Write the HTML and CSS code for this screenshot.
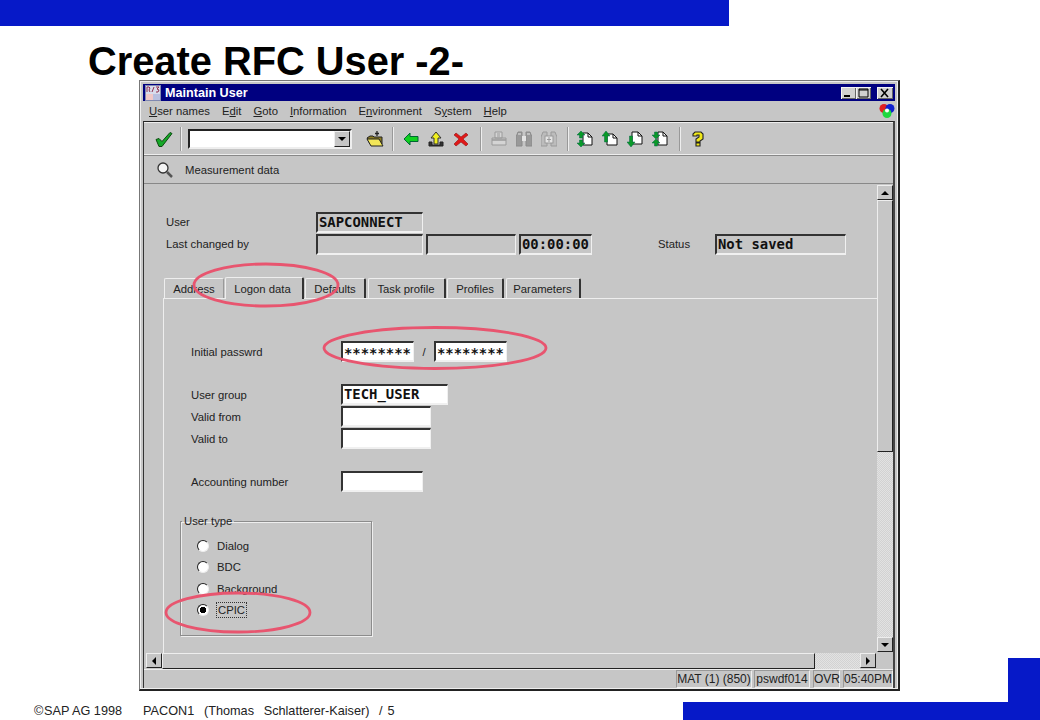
FILE: index.html
```html
<!DOCTYPE html>
<html lang="en">
<head>
<meta charset="utf-8">
<title>Create RFC User -2-</title>
<link rel="stylesheet" href="styles.css">
</head>
<body>
<div class="slide">
  <div class="topbar"></div>
  <h1 class="slide-title">Create RFC User -2-</h1>
  <div class="main">
    <div class="window">
      <div class="titlebar">
        <svg class="app-icon" viewBox="0 0 16 16"><rect x="0.5" y="0.5" width="15" height="15" fill="#d8dcec" stroke="#8088b0"/><rect x="1" y="9" width="7" height="6" fill="#f0c8c8"/><rect x="8" y="9" width="7" height="6" fill="#b8c0e0"/><path d="M2 7V2h2l1 1-1 2 1 2M7 7l2-5M11 2h3l-2 2 2 1-1 2h-2" fill="none" stroke="#903050"/></svg>
        <span class="titlebar-text">Maintain User</span>
        <span class="wbtn"><svg viewBox="0 0 15 12"><rect x="3" y="8" width="6" height="2" fill="#000"/></svg></span>
        <span class="wbtn"><svg viewBox="0 0 15 12"><path d="M3 2h9v8H3zM3 3h9" fill="none" stroke="#000"/></svg></span>
        <span class="wbtn wbtn-close"><svg viewBox="0 0 15 12"><path d="M4 2l7 8M11 2l-7 8" stroke="#000" stroke-width="1.6"/></svg></span>
      </div>
      <div class="menubar">
        <span><u>U</u>ser names</span><span>E<u>d</u>it</span><span><u>G</u>oto</span><span><u>I</u>nformation</span><span>E<u>n</u>vironment</span><span>S<u>y</u>stem</span><span><u>H</u>elp</span>
        <svg class="sap-logo" viewBox="0 0 16 16"><circle cx="5" cy="5.5" r="4.5" fill="#e02020"/><circle cx="11" cy="5.5" r="4.5" fill="#1020d0"/><circle cx="8" cy="10.5" r="4.5" fill="#20d840"/><circle cx="8" cy="7.5" r="2" fill="#fff"/></svg>
      </div>
      <div class="inner">
        <div class="toolbar">
          <span class="tool tool-first"><svg viewBox="0 0 18 16"><path d="M1 8l3-1 3 3 8-9 2 1L7 15H4z" fill="#16a828" stroke="#0c4a10"/></svg></span>
          <span class="sep sep-a"></span>
          <span class="combo"><span class="combo-btn"><svg viewBox="0 0 8 4"><path d="M0 0h8L4 4z" fill="#000"/></svg></span></span>
          <span class="tool tool-gap"><svg class="icon-wide" viewBox="0 0 18 16"><path d="M11 0v5M9 2.500h4" stroke="#222" stroke-width="1.300"/><path d="M1 7l3-2h3l1 1h8v7H4z" fill="#8a7a20" stroke="#222"/><path d="M1 8h12l4 7H5z" fill="#f2e658" stroke="#222"/></svg></span>
          <span class="sep"></span>
          <span class="tool"><svg viewBox="0 0 16 16"><path d="M1 8l6-6v3.500h8v5H7V14z" fill="#10d020" stroke="#063"/></svg></span>
          <span class="tool"><svg viewBox="0 0 16 16"><path d="M1 11h3v3h8v-3h3v4H1z" fill="#333" stroke="#222"/><path d="M8 1l5 6h-3v6H6V7H3z" fill="#f0f020" stroke="#333"/></svg></span>
          <span class="tool"><svg viewBox="0 0 16 16"><path d="M3 2l5 4 5-4 2 2-5 4 5 5-2 2-5-4-5 4-2-2 5-5-5-4z" fill="#e01818" stroke="#901010" stroke-width=".6"/></svg></span>
          <span class="sep sep-b"></span>
          <span class="tool"><svg viewBox="0 0 16 16"><path d="M4 1h7v6H4zM1 9h14v5H1z" fill="#d4d4d4" stroke="#9a9a9a"/><path d="M1 7h14v2H1zM6 3h3M6 5h3" fill="none" stroke="#9a9a9a"/></svg></span>
          <span class="tool"><svg viewBox="0 0 16 16"><path d="M2 1h4v14H0V6zM10 1h4l2 5v9h-6z" fill="#999" stroke="#8a8a8a"/><rect x="6" y="5" width="4" height="5" fill="#e4e4e4"/><path d="M2 3h3M11 3h3" stroke="#e4e4e4"/></svg></span>
          <span class="tool"><svg viewBox="0 0 16 16"><path d="M2 1h4v14H0V6zM10 1h4l2 5v9h-6z" fill="#bcbcbc" stroke="#9a9a9a"/><rect x="4" y="5" width="8" height="7" fill="#e4e4e4" stroke="#9a9a9a"/><path d="M8 6v5M6 8.500h4" stroke="#9a9a9a"/></svg></span>
          <span class="sep sep-c"></span>
          <span class="tool"><svg viewBox="0 0 16 16"><path d="M6 2h5l4 4v8H6z" fill="#fff" stroke="#111"/><path d="M11 2v4h4" fill="none" stroke="#111"/><path d="M4 0L8 4H5.500v3h-3V4H0zM4 16L8 12H5.500V9h-3v3H0z" fill="#0a9a28" stroke="#064" stroke-width=".5"/></svg></span>
          <span class="tool"><svg viewBox="0 0 16 16"><path d="M5 3h6l4 4v7H5z" fill="#fff" stroke="#111"/><path d="M11 3v4h4" fill="none" stroke="#111"/><path d="M4 0L8 5H5.500v6h-3V5H0z" fill="#0a9a28" stroke="#064" stroke-width=".5"/></svg></span>
          <span class="tool"><svg viewBox="0 0 16 16"><path d="M5 1h6l4 4v8H5z" fill="#fff" stroke="#111"/><path d="M11 1v4h4" fill="none" stroke="#111"/><path d="M4 16L8 11H5.500V5h-3v6H0z" fill="#0a9a28" stroke="#064" stroke-width=".5"/></svg></span>
          <span class="tool"><svg viewBox="0 0 16 16"><path d="M6 1h5l4 4v9H6z" fill="#fff" stroke="#111"/><path d="M11 1v4h4" fill="none" stroke="#111"/><path d="M4 8L8 4H5.500V1h-3v3H0zM4 8l4 4H5.500v3h-3v-3H0z" fill="#0a9a28" stroke="#064" stroke-width=".5"/></svg></span>
          <span class="sep sep-b"></span>
          <span class="tool"><svg viewBox="0 0 16 16"><path d="M3 5V3l2-2h6l2 2v5l-3 2v1H6V8l3-2V4H7v1zM6 12h4v3H6z" fill="#f0e818" stroke="#222" stroke-width="1.100"/></svg></span>
        </div>
        <div class="appbar">
          <svg class="magnifier" viewBox="0 0 18 18"><circle cx="7" cy="7" r="5" fill="#f4f4f4" stroke="#333" stroke-width="1.300"/><path d="M11 11l5 5" stroke="#555" stroke-width="2.500"/></svg>
          <span>Measurement data</span>
        </div>
        <div class="client">
          <div class="form">
            <div class="head-rows">
              <div class="row"><span class="label head-label">User</span><span class="field mono f107">SAPCONNECT</span></div>
              <div class="row">
                <span class="label head-label">Last changed by</span>
                <span class="field f107"></span>
                <span class="field f90"></span>
                <span class="field mono f73">00:00:00</span>
                <span class="label status-label">Status</span>
                <span class="field mono f131">Not saved</span>
              </div>
            </div>
            <div class="tabs">
              <span class="tab t-address">Address</span>
              <span class="tab tab-active t-logon">Logon data</span>
              <span class="tab t-defaults">Defaults</span>
              <span class="tab t-task">Task profile</span>
              <span class="tab t-profiles">Profiles</span>
              <span class="tab t-params">Parameters</span>
            </div>
            <div class="panel">
              <div class="row pw-row">
                <span class="label form-label">Initial passwrd</span>
                <span class="field input mono f73">********</span>
                <span class="slash">/</span>
                <span class="field input mono f73">********</span>
              </div>
              <div class="row group-row"><span class="label form-label">User group</span><span class="field input mono f107">TECH_USER</span></div>
              <div class="row"><span class="label form-label">Valid from</span><span class="field input f90"></span></div>
              <div class="row"><span class="label form-label">Valid to</span><span class="field input f90"></span></div>
              <div class="row acct-row"><span class="label form-label">Accounting number</span><span class="field input f82"></span></div>
              <fieldset class="usertype">
                <legend>User type</legend>
                <div class="radio-row"><span class="radio"></span><span>Dialog</span></div>
                <div class="radio-row"><span class="radio"></span><span>BDC</span></div>
                <div class="radio-row"><span class="radio"></span><span>Background</span></div>
                <div class="radio-row"><span class="radio radio-on"></span><span class="focus">CPIC</span></div>
              </fieldset>
            </div>
          </div>
          <div class="vscroll">
            <span class="sbtn"><svg viewBox="0 0 8 4"><path d="M0 4h8L4 0z" fill="#000"/></svg></span>
            <span class="vthumb"></span>
            <span class="track"></span>
            <span class="sbtn"><svg viewBox="0 0 8 4"><path d="M0 0h8L4 4z" fill="#000"/></svg></span>
          </div>
        </div>
        <div class="hscroll">
          <span class="sbtn sbtn-left"><svg class="arrow-v" viewBox="0 0 4 8"><path d="M4 0v8L0 4z" fill="#000"/></svg></span>
          <span class="hthumb"></span>
          <span class="track"></span>
          <span class="sbtn"><svg class="arrow-v" viewBox="0 0 4 8"><path d="M0 0v8l4-4z" fill="#000"/></svg></span>
          <span class="corner"></span>
        </div>
        <div class="statusbar">
          <span class="cell c-mat">MAT (1) (850)</span>
          <span class="cell c-host">pswdf014</span>
          <span class="cell c-ovr">OVR</span>
          <span class="cell c-time">05:40PM</span>
        </div>
      </div>
    </div>
    <div class="aside"><div class="aside-block"></div></div>
  </div>
  <div class="bottom">
    <div class="foot-text"><span class="copy">©</span><span class="foot-a">SAP AG 1998</span><span class="foot-b">PACON1&nbsp; (Thomas&nbsp; Schlatterer-Kaiser)&nbsp; / 5</span></div>
    <div class="foot-shape"><div class="foot-stem"></div><div class="foot-bar"></div></div>
  </div>
  <svg class="marks" viewBox="0 0 1040 720" aria-hidden="true">
    <ellipse cx="266" cy="285" rx="72" ry="21" />
    <ellipse cx="435" cy="348" rx="111" ry="20.500" />
    <ellipse cx="238" cy="612.500" rx="72" ry="19.500" />
  </svg>
</div>
</body>
</html>
```
FILE: styles.css
```css
* { box-sizing: border-box; }
html, body { margin: 0; padding: 0; background: #fff; }
.slide { position: relative; width: 1040px; height: 720px; overflow: hidden; display: flex; flex-direction: column; font-family: "Liberation Sans", Arial, sans-serif; }
.topbar { width: 729px; height: 26px; background: #0619c8; flex: none; }
.slide-title { margin: 0; padding: 16px 0 0 88px; height: 54px; font-size: 39.8px; line-height: 38px; font-weight: bold; color: #000; flex: none; }
.main { display: flex; height: 611px; flex: none; }
.window { width: 761px; margin-left: 139px; height: 611px; background: #c6c6c6; border: 1px solid #777; border-right: 2px solid #222; border-bottom: 2px solid #222; box-shadow: inset 1px 1px 0 #eee, inset -1px -1px 0 #eee; padding: 3px 3px 1px 3px; display: flex; flex-direction: column; font-size: 11.3px; color: #222; }
.aside { flex: 1; display: flex; justify-content: flex-end; }
.aside-block { width: 32px; height: 33px; margin-top: 578px; background: #0619c8; }
.titlebar { height: 17px; background: #000080; display: flex; align-items: center; padding: 0 2px; flex: none; }
.app-icon { width: 16px; height: 16px; margin-right: 4px; }
.titlebar-text { color: #fff; font: bold 12.6px "Liberation Sans", Arial, sans-serif; flex: 1; }
.wbtn { width: 15px; height: 12px; background: #d0d0d0; border: 0; box-shadow: inset 1px 1px 0 #f4f4f4, inset -1px -1px 0 #666; display: block; }
.wbtn svg { display: block; width: 15px; height: 12px; }
.wbtn-close { margin-left: 6px; width: 16px; }
.menubar { height: 20px; display: flex; align-items: center; gap: 12px; padding-left: 6px; position: relative; flex: none; }
.menubar span { white-space: nowrap; }
.sap-logo { width: 16px; height: 16px; margin-left: auto; margin-right: 0; }
.inner { flex: 1; min-height: 0; border-top: 1px solid #222; border-left: 1px solid #333; border-right: 2px solid #444; display: flex; flex-direction: column; }
.toolbar { height: 33px; flex: none; display: flex; align-items: center; padding: 2px 0 0 7px; border-bottom: 1px solid #eee; box-shadow: inset 0 1px 0 #eee, 0 1px 0 #888; }
.tool { width: 25px; height: 20px; display: flex; align-items: center; justify-content: center; flex: none; }
.tool svg { width: 16px; height: 16px; display: block; }
.tool .icon-wide { width: 18px; }
.tool-first svg { width: 18px; height: 17px; }
.tool-gap { margin-left: 10px; }
.sep { width: 2px; height: 24px; background: #eee; border-left: 1px solid #999; margin: 0 4px 0 5px; flex: none; }
.sep-a { margin: 0 6px 0 4px; }
.sep-b { margin: 0 4px 0 7px; }
.sep-c { margin: 0 3px 0 6px; }
.combo { width: 164px; height: 20px; background: #fff; border: 2px solid #222; border-right-color: #eee; border-bottom-color: #eee; display: flex; justify-content: flex-end; align-items: center; flex: none; }
.combo-btn { width: 16px; height: 16px; background: #c6c6c6; border: 1px solid; border-color: #eee #222 #222 #eee; display: flex; align-items: center; justify-content: center; }
.combo-btn svg { width: 8px; height: 4px; }
.appbar { height: 28px; flex: none; display: flex; align-items: center; padding-left: 12px; gap: 11px; border-bottom: 1px solid #888; margin-top: 1px; }
.magnifier { width: 18px; height: 18px; }
.client { height: 469px; flex: none; display: flex; }
.form { width: 733px; display: flex; flex-direction: column; }
.head-rows { padding: 27px 0 0 22px; flex: none; }
.row { display: flex; align-items: center; height: 21px; }
.head-rows .row { height: 22px; }
.label { display: block; flex: none; }
.head-label { width: 150px; }
.form-label { width: 150px; }
.status-label { margin-left: 63px; width: 57px; }
.field { display: block; flex: none; height: 21px; background: #c6c6c6; border-style: solid; border-width: 2px 1px 2px 2px; border-color: #333 #f0f0f0 #f0f0f0 #333; padding-left: 1px; white-space: nowrap; overflow: hidden; color: #111; margin-right: 3px; }
.mono { font: bold 13.9px/16px "DejaVu Sans Mono", "Liberation Mono", monospace; }
.pw-row .mono { line-height: 21px; }
.input { background: #fff; }
.f107 { width: 107px; }
.f90 { width: 90px; }
.f82 { width: 82px; }
.f73 { width: 73px; }
.f131 { width: 131px; }
.tabs { display: flex; height: 21px; margin-top: 22px; padding-left: 20px; flex: none; align-items: flex-end; }
.tab { height: 20px; flex: none; text-align: center; line-height: 20px; border-top: 1px solid #eee; border-left: 1px solid #eee; border-right: 2px solid #333; border-radius: 2px 2px 0 0; white-space: nowrap; }
.tab-active { position: relative; z-index: 1; margin-bottom: -1px; background: #c6c6c6; height: 22px; line-height: 22px; padding-right: 3px; margin-left: 1px; margin-right: 1px; }
.t-address { width: 60px; border-right: 1px solid #999; }
.t-logon { width: 79px; }
.t-defaults { width: 61px; }
.t-task { width: 78px; margin-left: 2px; padding-right: 1px; }
.t-profiles { width: 57px; margin-left: 1px; }
.t-params { width: 75px; margin-left: 2px; padding-right: 1px; }
.panel { flex: 1; margin-left: 19px; border-top: 1px solid #eee; border-left: 1px solid #eee; padding: 42px 0 0 27px; }
.panel .form-label { width: 150px; }
.pw-row { margin-bottom: 22px; }
.slash { width: 14px; text-align: center; margin-right: 3px; }
.group-row { margin-bottom: 1px; }
.panel .row + .row:not(.acct-row):not(.group-row) { margin-top: 1px; }
.acct-row { margin-top: 22px; }
.usertype { width: 192px; height: 122px; margin: 22px 0 0 -11px; padding: 0; border: 1px solid #8c8c8c; box-shadow: 1px 1px 0 #eee, inset 1px 1px 0 #eee; }
.usertype legend { padding: 0 2px; margin-left: 1px; line-height: 14px; }
.radio-row { display: flex; align-items: center; height: 21.5px; gap: 8px; padding-left: 16px; }
.radio-row:first-of-type { margin-top: 7px; }
.radio { width: 12px; height: 12px; border-radius: 50%; background: #fff; border: 1px solid; border-color: #222 #eee #eee #222; flex: none; }
.radio-on { background: radial-gradient(circle, #000 0 3px, #fff 3.500px); }
.focus { outline: 1px dotted #333; padding: 1px; }
.vscroll { width: 16px; display: flex; flex-direction: column; flex: none; margin: 1px 0; }
.sbtn { width: 16px; height: 15px; flex: none; background: #c6c6c6; border: 1px solid; border-color: #eee #222 #222 #eee; display: flex; align-items: center; justify-content: center; }
.sbtn svg { width: 8px; height: 4px; }
.sbtn .arrow-v { width: 4px; height: 8px; }
.vthumb { height: 252px; flex: none; background: #c6c6c6; border: 1px solid; border-color: #eee #222 #222 #eee; }
.track { flex: 1; background: repeating-conic-gradient(#e2e2e2 0 25%, #d2d2d2 0 50%) 0 0 / 2px 2px; }
.hscroll { height: 16px; flex: none; display: flex; }
.sbtn-left { margin-left: 2px; }
.hthumb { width: 653px; background: #c6c6c6; border: 1px solid; border-color: #eee #222 #222 #eee; flex: none; }
.corner { width: 16px; margin-left: 1px; background: #c6c6c6; flex: none; }
.statusbar { flex: 1; display: flex; justify-content: flex-end; align-items: stretch; border-top: 1px solid #eee; font-size: 12px; }
.cell { display: block; border: 1px solid; border-color: #999 #eee #eee #999; line-height: 16px; white-space: nowrap; text-align: center; color: #222; flex: none; }
.c-mat { width: 76px; margin-right: 2px; }
.c-host { width: 56px; margin-right: 3px; }
.c-ovr { width: 27px; margin-right: 3px; }
.c-time { width: 50px; }
.bottom { flex: 1; display: flex; }
.foot-text { flex: 1; padding: 12px 0 0 34px; font-size: 12.7px; line-height: 16px; color: #222; white-space: nowrap; display: flex; }
.copy { width: 10px; }
.foot-b { margin-left: 21px; word-spacing: 1.3px; }
.foot-shape { width: 357px; display: flex; flex-direction: column; align-items: flex-end; }
.foot-stem { width: 32px; height: 11px; background: #0619c8; }
.foot-bar { width: 100%; flex: 1; background: #0619c8; }
.marks { position: absolute; left: 0; top: 0; width: 1040px; height: 720px; pointer-events: none; }
.marks ellipse { fill: none; stroke: #e8556f; stroke-width: 2.800; }
```
